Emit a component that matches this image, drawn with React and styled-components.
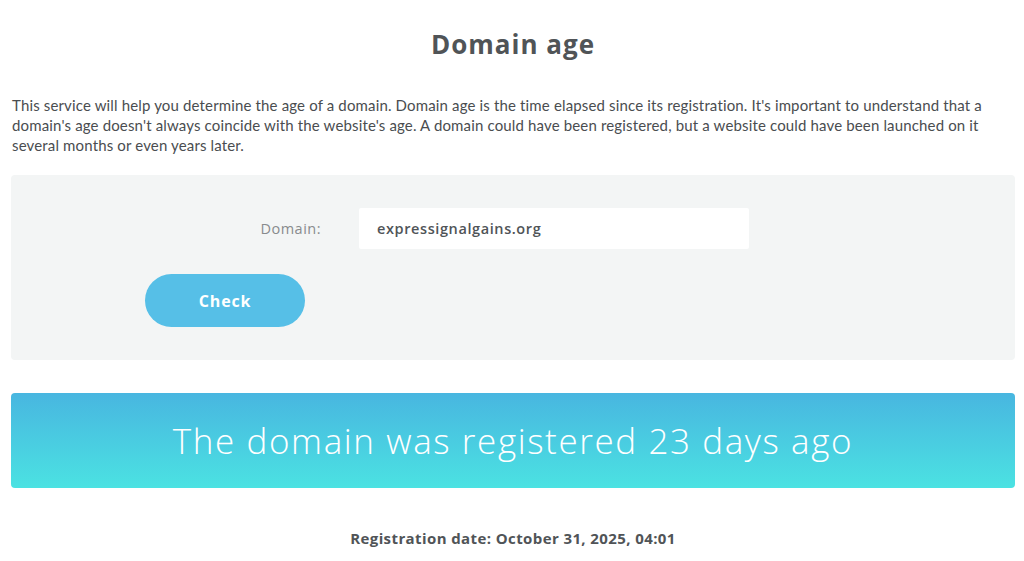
import React from "react";
import styled, { createGlobalStyle } from "styled-components";

const head = `"Open Sans", "Noto Sans", sans-serif`;
const body = `Lato, "Open Sans", sans-serif`;

const Global = createGlobalStyle`
  body {
    margin: 0;
    background: #ffffff;
  }
`;

const Page = styled.div`
  width: 1024px;
  height: 561px;
  overflow: hidden;
  padding: 0 9px 0 11px;
  box-sizing: border-box;
`;

const Title = styled.h1`
  margin: 0;
  padding-top: 28px;
  height: 32px;
  line-height: 32px;
  text-align: center;
  font-family: ${head};
  font-weight: 700;
  font-size: 26px;
  letter-spacing: 1px;
  color: #505457;
`;

const Intro = styled.p`
  margin: 35px 0 0 1px;
  font-family: ${body};
  font-size: 15px;
  letter-spacing: 0.15px;
  line-height: 20px;
  color: #4a4d50;
`;

const Panel = styled.div`
  margin-top: 20px;
  height: 185px;
  background: #f3f5f5;
  border-radius: 4px;
  box-sizing: border-box;
  padding-top: 33px;
`;

const Row = styled.div`
  display: flex;
  align-items: center;
`;

const Label = styled.label`
  width: 310px;
  text-align: right;
  font-family: ${head};
  font-size: 14.5px;
  letter-spacing: 0.5px;
  font-weight: 500;
  color: #888b8d;
`;

const Input = styled.div`
  margin-left: 38px;
  width: 390px;
  height: 41px;
  background: #ffffff;
  border-radius: 2px;
  display: flex;
  align-items: center;
  padding-left: 18px;
  box-sizing: border-box;
  font-family: ${head};
  font-size: 14.5px;
  letter-spacing: 0.6px;
  font-weight: 600;
  color: #505457;
`;

const Button = styled.button`
  margin: 25px 0 0 134px;
  width: 160px;
  height: 53px;
  border: 0;
  border-radius: 27px;
  background: #56bfe7;
  color: #ffffff;
  font-family: ${head};
  font-weight: 700;
  font-size: 16px;
  letter-spacing: 0.8px;
`;

const Banner = styled.div`
  margin-top: 33px;
  height: 95px;
  border-radius: 4px;
  background: linear-gradient(180deg, #48b6e0 0%, #4be2e2 100%);
  display: flex;
  align-items: center;
  justify-content: center;
  font-family: ${head};
  font-weight: 300;
  font-size: 35px;
  letter-spacing: 1.6px;
  color: #ffffff;
`;

const DateLine = styled.div`
  margin-top: 40px;
  text-align: center;
  font-family: ${head};
  font-weight: 700;
  font-size: 15px;
  letter-spacing: 0.4px;
  color: #505457;
`;

export default function App() {
  return (
    <Page>
      <Global />
      <Title>Domain age</Title>
      <Intro>
        This service will help you determine the age of a domain. Domain age is the time elapsed since its
        registration. It's important to understand that a domain's age doesn't always coincide with the
        website's age. A domain could have been registered, but a website could have been launched on it
        several months or even years later.
      </Intro>
      <Panel>
        <Row>
          <Label>Domain:</Label>
          <Input>expressignalgains.org</Input>
        </Row>
        <Button>Check</Button>
      </Panel>
      <Banner>The domain was registered 23 days ago</Banner>
      <DateLine>Registration date: October 31, 2025, 04:01</DateLine>
    </Page>
  );
}
